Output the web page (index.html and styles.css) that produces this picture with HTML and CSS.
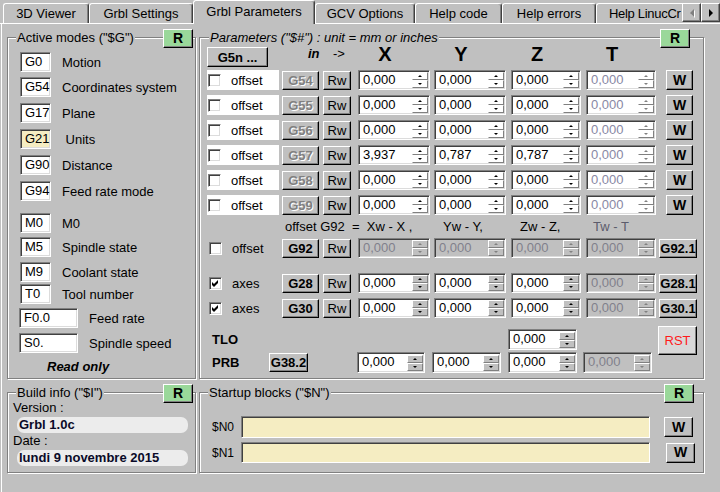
FILE: index.html
```html
<!DOCTYPE html>
<html>
<head>
<meta charset="utf-8">
<link rel="stylesheet" href="styles.css">
</head>
<body>
<div class="tabbar">
  <div class="tabs">
    <div class="tab w1">3D Viewer</div>
    <div class="tab w2">Grbl Settings</div>
    <div class="tab active w3">Grbl Parameters</div>
    <div class="tab w4">GCV Options</div>
    <div class="tab w5">Help code</div>
    <div class="tab w6">Help errors</div>
    <div class="tab w7">Help LinucCr</div>
  </div>
  <div class="scrollers">
    <div class="arr"><span class="tri-l"></span></div>
    <div class="arr"><span class="tri-r"></span></div>
  </div>
</div>

<div class="page">
  <div class="layout">

    <section class="group modes">
      <div class="gtitle">Active modes ("$G")</div>
      <div class="btn rbtn">R</div>
      <div class="mode m0"><span class="code sunk">G0</span><span class="mlabel">Motion</span></div>
      <div class="mode m5"><span class="code sunk">G54</span><span class="mlabel">Coordinates system</span></div>
      <div class="mode"><span class="code sunk">G17</span><span class="mlabel">Plane</span></div>
      <div class="mode"><span class="code sunk yel">G21</span><span class="mlabel pre"> Units</span></div>
      <div class="mode"><span class="code sunk">G90</span><span class="mlabel">Distance</span></div>
      <div class="mode"><span class="code sunk">G94</span><span class="mlabel">Feed rate mode</span></div>
      <div class="mode m12"><span class="code sunk">M0</span><span class="mlabel">M0</span></div>
      <div class="mode m4"><span class="code sunk">M5</span><span class="mlabel">Spindle state</span></div>
      <div class="mode m5"><span class="code sunk">M9</span><span class="mlabel">Coolant state</span></div>
      <div class="mode m2"><span class="code sunk">T0</span><span class="mlabel">Tool number</span></div>
      <div class="mode m4"><span class="code sunk wide">F0.0</span><span class="mlabel">Feed rate</span></div>
      <div class="mode m5"><span class="code sunk wide">S0.</span><span class="mlabel">Spindle speed</span></div>
      <div class="ro">Read only</div>
    </section>

    <section class="group params">
      <div class="gtitle it">Parameters ("$#") : unit = mm or inches</div>
      <div class="btn rbtn rp">R</div>

      <div class="phead">
        <div class="btn g5n">G5n ...</div>
        <span class="in">in</span>
        <span class="arrt">-&gt;</span>
        <span class="axis ax">X</span>
        <span class="axis ay">Y</span>
        <span class="axis az">Z</span>
        <span class="axis at">T</span>
      </div>

      <div class="prow first">
        <div class="chkcell white"><span class="chk"></span><span class="lbl">offset</span></div>
        <div class="btn gbtn dis">G54</div>
        <div class="btn rw">Rw</div>
        <div class="spin sunk sx"><span class="val">0,000</span><span class="sp"><i class="up"></i><i class="dn"></i></span></div>
        <div class="spin sunk sy"><span class="val">0,000</span><span class="sp"><i class="up"></i><i class="dn"></i></span></div>
        <div class="spin sunk sz"><span class="val">0,000</span><span class="sp"><i class="up"></i><i class="dn"></i></span></div>
        <div class="spin sunk st dt"><span class="val">0,000</span><span class="sp"><i class="up"></i><i class="dn"></i></span></div>
        <div class="btn wbtn">W</div>
      </div>
      <div class="prow">
        <div class="chkcell white"><span class="chk"></span><span class="lbl">offset</span></div>
        <div class="btn gbtn dis">G55</div>
        <div class="btn rw">Rw</div>
        <div class="spin sunk sx"><span class="val">0,000</span><span class="sp"><i class="up"></i><i class="dn"></i></span></div>
        <div class="spin sunk sy"><span class="val">0,000</span><span class="sp"><i class="up"></i><i class="dn"></i></span></div>
        <div class="spin sunk sz"><span class="val">0,000</span><span class="sp"><i class="up"></i><i class="dn"></i></span></div>
        <div class="spin sunk st dt"><span class="val">0,000</span><span class="sp"><i class="up"></i><i class="dn"></i></span></div>
        <div class="btn wbtn">W</div>
      </div>
      <div class="prow">
        <div class="chkcell white"><span class="chk"></span><span class="lbl">offset</span></div>
        <div class="btn gbtn dis">G56</div>
        <div class="btn rw">Rw</div>
        <div class="spin sunk sx"><span class="val">0,000</span><span class="sp"><i class="up"></i><i class="dn"></i></span></div>
        <div class="spin sunk sy"><span class="val">0,000</span><span class="sp"><i class="up"></i><i class="dn"></i></span></div>
        <div class="spin sunk sz"><span class="val">0,000</span><span class="sp"><i class="up"></i><i class="dn"></i></span></div>
        <div class="spin sunk st dt"><span class="val">0,000</span><span class="sp"><i class="up"></i><i class="dn"></i></span></div>
        <div class="btn wbtn">W</div>
      </div>
      <div class="prow">
        <div class="chkcell white"><span class="chk"></span><span class="lbl">offset</span></div>
        <div class="btn gbtn dis">G57</div>
        <div class="btn rw">Rw</div>
        <div class="spin sunk sx"><span class="val">3,937</span><span class="sp"><i class="up"></i><i class="dn"></i></span></div>
        <div class="spin sunk sy"><span class="val">0,787</span><span class="sp"><i class="up"></i><i class="dn"></i></span></div>
        <div class="spin sunk sz"><span class="val">0,787</span><span class="sp"><i class="up"></i><i class="dn"></i></span></div>
        <div class="spin sunk st dt"><span class="val">0,000</span><span class="sp"><i class="up"></i><i class="dn"></i></span></div>
        <div class="btn wbtn">W</div>
      </div>
      <div class="prow">
        <div class="chkcell white"><span class="chk"></span><span class="lbl">offset</span></div>
        <div class="btn gbtn dis">G58</div>
        <div class="btn rw">Rw</div>
        <div class="spin sunk sx"><span class="val">0,000</span><span class="sp"><i class="up"></i><i class="dn"></i></span></div>
        <div class="spin sunk sy"><span class="val">0,000</span><span class="sp"><i class="up"></i><i class="dn"></i></span></div>
        <div class="spin sunk sz"><span class="val">0,000</span><span class="sp"><i class="up"></i><i class="dn"></i></span></div>
        <div class="spin sunk st dt"><span class="val">0,000</span><span class="sp"><i class="up"></i><i class="dn"></i></span></div>
        <div class="btn wbtn">W</div>
      </div>
      <div class="prow">
        <div class="chkcell white"><span class="chk"></span><span class="lbl">offset</span></div>
        <div class="btn gbtn dis">G59</div>
        <div class="btn rw">Rw</div>
        <div class="spin sunk sx"><span class="val">0,000</span><span class="sp"><i class="up"></i><i class="dn"></i></span></div>
        <div class="spin sunk sy"><span class="val">0,000</span><span class="sp"><i class="up"></i><i class="dn"></i></span></div>
        <div class="spin sunk sz"><span class="val">0,000</span><span class="sp"><i class="up"></i><i class="dn"></i></span></div>
        <div class="spin sunk st dt"><span class="val">0,000</span><span class="sp"><i class="up"></i><i class="dn"></i></span></div>
        <div class="btn wbtn">W</div>
      </div>

      <div class="note">
        <span class="n1">offset G92  =  Xw - X ,</span>
        <span class="n2">Yw - Y,</span>
        <span class="n3">Zw - Z,</span>
        <span class="n4">Tw - T</span>
      </div>

      <div class="prow r92">
        <div class="chkcell pl2"><span class="chk"></span><span class="lbl">offset</span></div>
        <div class="btn gbtn">G92</div>
        <div class="btn rw">Rw</div>
        <div class="spin sunk sx dis"><span class="val">0,000</span><span class="sp"><i class="up"></i><i class="dn"></i></span></div>
        <div class="spin sunk sy dis"><span class="val">0,000</span><span class="sp"><i class="up"></i><i class="dn"></i></span></div>
        <div class="spin sunk sz dis"><span class="val">0,000</span><span class="sp"><i class="up"></i><i class="dn"></i></span></div>
        <div class="spin sunk st dis"><span class="val">0,000</span><span class="sp"><i class="up"></i><i class="dn"></i></span></div>
        <div class="btn g1btn">G92.1</div>
      </div>

      <div class="prow r28">
        <div class="chkcell pl2"><span class="chk"><svg width="9" height="9" viewBox="0 0 9 9"><polygon points="1,3 3,5 7,1 7,4 3,8 1,6" fill="#000"/></svg></span><span class="lbl">axes</span></div>
        <div class="btn gbtn">G28</div>
        <div class="btn rw">Rw</div>
        <div class="spin sunk sx gs"><span class="val">0,000</span><span class="sp"><i class="up"></i><i class="dn"></i></span></div>
        <div class="spin sunk sy gs"><span class="val">0,000</span><span class="sp"><i class="up"></i><i class="dn"></i></span></div>
        <div class="spin sunk sz gs"><span class="val">0,000</span><span class="sp"><i class="up"></i><i class="dn"></i></span></div>
        <div class="spin sunk st dis"><span class="val">0,000</span><span class="sp"><i class="up"></i><i class="dn"></i></span></div>
        <div class="btn g1btn">G28.1</div>
      </div>
      <div class="prow">
        <div class="chkcell pl2"><span class="chk"><svg width="9" height="9" viewBox="0 0 9 9"><polygon points="1,3 3,5 7,1 7,4 3,8 1,6" fill="#000"/></svg></span><span class="lbl">axes</span></div>
        <div class="btn gbtn">G30</div>
        <div class="btn rw">Rw</div>
        <div class="spin sunk sx gs"><span class="val">0,000</span><span class="sp"><i class="up"></i><i class="dn"></i></span></div>
        <div class="spin sunk sy gs"><span class="val">0,000</span><span class="sp"><i class="up"></i><i class="dn"></i></span></div>
        <div class="spin sunk sz gs"><span class="val">0,000</span><span class="sp"><i class="up"></i><i class="dn"></i></span></div>
        <div class="spin sunk st dis"><span class="val">0,000</span><span class="sp"><i class="up"></i><i class="dn"></i></span></div>
        <div class="btn g1btn">G30.1</div>
      </div>

      <div class="probe">
        <span class="plabel tlo">TLO</span>
        <div class="spin sunk gs pz tloz"><span class="val">0,000</span><span class="sp"><i class="up"></i><i class="dn"></i></span></div>
        <div class="btn rst">RST</div>
        <span class="plabel prb">PRB</span>
        <div class="btn g38">G38.2</div>
        <div class="spin sunk gs px"><span class="val">0,000</span><span class="sp"><i class="up"></i><i class="dn"></i></span></div>
        <div class="spin sunk gs py"><span class="val">0,000</span><span class="sp"><i class="up"></i><i class="dn"></i></span></div>
        <div class="spin sunk gs pz"><span class="val">0,000</span><span class="sp"><i class="up"></i><i class="dn"></i></span></div>
        <div class="spin sunk dis pt"><span class="val">0,000</span><span class="sp"><i class="up"></i><i class="dn"></i></span></div>
      </div>
    </section>

    <section class="group build">
      <div class="gtitle">Build info ("$I")</div>
      <div class="btn rbtn">R</div>
      <div class="bl">Version :</div>
      <div class="bfld">Grbl 1.0c</div>
      <div class="bl">Date :</div>
      <div class="bfld">lundi 9 novembre 2015</div>
    </section>

    <section class="group startup">
      <div class="gtitle">Startup blocks ("$N")</div>
      <div class="btn rbtn rs">R</div>
      <div class="nrow"><span class="nlabel">$N0</span><div class="nfld"></div><div class="btn wbtn nw">W</div></div>
      <div class="nrow n2row"><span class="nlabel">$N1</span><div class="nfld"></div><div class="btn wbtn nw">W</div></div>
    </section>

  </div>
</div>
</body>
</html>
```

FILE: styles.css
```css
* { box-sizing: border-box; }
html, body { margin: 0; padding: 0; }
body {
  width: 720px;
  height: 492px;
  overflow: hidden;
  background: #c0c0c0;
  font-family: "Liberation Sans", Arial, sans-serif;
  font-size: 13px;
  color: #000;
}

/* ---------- tabs ---------- */
.tabbar {
  display: flex;
  height: 24px;
  background: linear-gradient(to bottom, transparent 23px, #fff 23px);
}
.tabs {
  flex: 1;
  display: flex;
  height: 24px;
  overflow: hidden;
  padding-left: 3px;
}
.tab {
  flex: none;
  height: 20px;
  margin-top: 3px;
  background: #c0c0c0;
  border-top: 1px solid #fff;
  border-left: 1px solid #fff;
  border-right: 1px solid #404040;
  box-shadow: inset -1px 0 0 #808080;
  border-radius: 3px 3px 0 0;
  text-align: center;
  line-height: 19px;
  white-space: nowrap;
}
.tab.active {
  height: 24px;
  margin-top: 0;
  line-height: 21px;
}
.w1 { width: 86px; }
.w2 { width: 104px; }
.w3 { width: 122px; }
.w4 { width: 100px; }
.w5 { width: 87px; }
.w6 { width: 94px; }
.w7 { width: 120px; text-align: left; padding-left: 12px; letter-spacing: -0.3px; }

.scrollers { display: flex; }
.arr {
  width: 19px;
  height: 19px;
  margin-top: 3px;
  background: #c0c0c0;
  border: 1px solid;
  border-color: #fff #404040 #404040 #fff;
  box-shadow: inset -1px -1px 0 #808080;
  display: flex;
  align-items: center;
  justify-content: center;
}
.tri-l {
  width: 0; height: 0;
  border-top: 4px solid transparent;
  border-bottom: 4px solid transparent;
  border-right: 4px solid #808080;
  filter: drop-shadow(1px 1px 0 #fff);
}
.tri-r {
  width: 0; height: 0;
  margin-left: 1px;
  border-top: 4px solid transparent;
  border-bottom: 4px solid transparent;
  border-left: 4px solid #000;
}

/* ---------- page ---------- */
.page {
  margin-left: 1px;
  border-left: 1px solid #fff;
  height: 468px;
  padding: 13px 0 0 5px;
}
.layout {
  display: grid;
  grid-template-columns: 189px 505px;
  grid-template-rows: 342px 81px;
  column-gap: 3px;
  row-gap: 13px;
}
.group {
  position: relative;
  border: 1px solid #808080;
  box-shadow: inset 1px 1px 0 #fff, 1px 1px 0 #fff;
}
.gtitle {
  position: absolute;
  top: -8px;
  left: 8px;
  padding: 0 1px;
  background: #c0c0c0;
  line-height: 15px;
  white-space: pre;
}
.gtitle.it { font-style: italic; left: 9px; }

/* ---------- common controls ---------- */
.btn {
  flex: none;
  background: #c0c0c0;
  border: 1px solid;
  border-color: #fff #000 #000 #fff;
  box-shadow: inset -1px -1px 0 #808080;
  display: flex;
  align-items: center;
  justify-content: center;
  white-space: nowrap;
  line-height: 15px;
}
.rbtn {
  position: absolute;
  top: -9px;
  right: 2px;
  width: 30px;
  height: 19px;
  background: #9ad89a;
  font-weight: bold;
  font-size: 14px;
}
.rbtn.rp { right: 13px; }
.rbtn.rs { right: 9px; }

.sunk {
  border: 1px solid;
  border-color: #808080 #fff #fff #808080;
  box-shadow: inset 1px 1px 0 #404040, inset -1px -1px 0 #dcdcdc;
}

/* ---------- active modes ---------- */
.modes { padding: 14px 0 0 12px; }
.mode {
  display: flex;
  align-items: center;
  height: 20px;
  margin-top: 6px;
}
.mode.m0 { margin-top: 0; }
.mode.m2 { margin-top: 2px; }
.mode.m4 { margin-top: 4px; }
.mode.m5 { margin-top: 5px; }
.mode.m12 { margin-top: 12px; }
.code {
  flex: none;
  width: 31px;
  height: 20px;
  background: #fff;
  padding-left: 4px;
  line-height: 18px;
}
.code.wide { width: 59px; margin-left: -1px; }
.code.yel { background: #f5edc2; }
.mlabel { margin-left: 11px; white-space: pre; }
.ro {
  margin: 7px 0 0 27px;
  font-weight: bold;
  font-style: italic;
  line-height: 14px;
}

/* ---------- parameters ---------- */
.params { padding: 9px 0 0 7px; }
.phead {
  display: flex;
  align-items: flex-start;
  height: 20px;
}
.g5n { width: 61px; height: 20px; font-weight: bold; }
.in {
  margin-left: 40px;
  width: 25px;
  font-weight: bold;
  font-style: italic;
  line-height: 14px;
}
.arrt { width: 25px; line-height: 14px; }
.axis {
  font-size: 20px;
  font-weight: bold;
  line-height: 20px;
  margin-top: -3px;
  padding-right: 18px;
  text-align: center;
}
.ax { width: 72px; }
.ay { width: 72px; margin-left: 4px; }
.az { width: 70px; margin-left: 5px; }
.at { width: 70px; margin-left: 5px; }

.prow {
  display: flex;
  align-items: center;
  height: 20px;
  margin-top: 5px;
}
.prow.first { margin-top: 3px; }
.prow.r92 { margin-top: 3px; }
.prow.r28 { margin-top: 15px; }

.chkcell {
  flex: none;
  width: 72px;
  height: 20px;
  display: flex;
  align-items: center;
  padding-left: 1px;
}
.chkcell.white { background: #fff; }
.chkcell.pl2 { padding-left: 2px; }
.chk {
  flex: none;
  width: 13px;
  height: 13px;
  background: #fff;
  border: 1px solid;
  border-color: #808080 #fff #fff #808080;
  box-shadow: inset 1px 1px 0 #404040, inset -1px -1px 0 #dcdcdc;
  padding: 1px;
  display: flex;
}
.chk svg { display: block; }
.lbl { margin-left: 10px; }

.gbtn { width: 37px; height: 19px; margin-left: 3px; font-weight: bold; }
.gbtn.dis { color: #808080; text-shadow: 1px 1px 0 #fff; }
.rw { width: 28px; height: 19px; margin-left: 4px; }
.wbtn { width: 27px; height: 20px; margin-left: 10px; font-weight: bold; font-size: 14px; }
.g1btn { width: 38px; height: 19px; margin-left: 3px; font-weight: bold; }

.spin {
  flex: none;
  height: 20px;
  display: flex;
  background: #fff;
}
.sx { width: 72px; margin-left: 7px; }
.sy { width: 72px; margin-left: 4px; }
.sz { width: 70px; margin-left: 5px; }
.st { width: 70px; margin-left: 5px; }
.val {
  flex: 1;
  padding-left: 4px;
  line-height: 18px;
}
.sp {
  flex: none;
  width: 16px;
  display: flex;
  flex-direction: column;
  justify-content: center;
  margin: 1px 1px 1px 0;
}
.sp i {
  display: flex;
  align-items: center;
  justify-content: center;
  height: 8px;
  border: 1px solid;
  border-color: #fff #808080 #808080 #fff;
}
.sp i::after {
  content: "";
  width: 0;
  height: 0;
  border-left: 2px solid transparent;
  border-right: 2px solid transparent;
}
.sp i.up::after { border-bottom: 2px solid #000; }
.sp i.dn::after { border-top: 2px solid #000; }
.spin.gs .sp i { background: #c0c0c0; }
.spin.dt { color: #8888a4; }
.spin.dis { background: #c0c0c0; color: #80808c; }
.spin.dis .sp i.up::after { border-bottom-color: #808080; }
.spin.dis .sp i.dn::after { border-top-color: #808080; }
.spin.dt .sp i.up::after { border-bottom-color: #808080; }
.spin.dt .sp i.dn::after { border-top-color: #808080; }

.note {
  display: flex;
  margin-top: 4px;
  height: 16px;
  line-height: 16px;
  padding-left: 78px;
  white-space: pre;
}
.n1 { width: 158px; }
.n2 { width: 77px; }
.n3 { width: 73px; }
.n4 { color: #5c5c6c; }

.probe {
  display: grid;
  grid-template-columns: 57px 88px 75px 76px 75px 75px 39px;
  grid-template-rows: 21px 21px;
  row-gap: 2px;
  margin: 11px 0 0 5px;
  align-items: center;
}
.plabel { font-weight: bold; }
.tlo { grid-row: 1; grid-column: 1; }
.prb { grid-row: 2; grid-column: 1; }
.tloz { grid-row: 1; grid-column: 5; }
.rst {
  grid-row: 1 / 3;
  grid-column: 7;
  align-self: start;
  margin-top: -3px;
  width: 39px;
  height: 29px;
  background: #d8d8d8;
  color: #ff1a1a;
}
.g38 { grid-row: 2; grid-column: 2; width: 39px; height: 19px; font-weight: bold; }
.probe .spin { height: 21px; }
.px { grid-row: 2; grid-column: 3; width: 68px; }
.py { grid-row: 2; grid-column: 4; width: 69px; }
.pz { grid-row: 2; grid-column: 5; width: 69px; }
.pz.tloz { grid-row: 1; }
.pt { grid-row: 2; grid-column: 6; width: 69px; }

/* ---------- build info ---------- */
.build { padding: 7px 0 0 5px; }
.bl { line-height: 16px; }
.bfld {
  margin: 1px 0 0 4px;
  width: 171px;
  height: 16px;
  border-radius: 7px;
  background: #ececec;
  font-weight: bold;
  padding-left: 2px;
  line-height: 16px;
  color: #0a0a28;
}

/* ---------- startup blocks ---------- */
.startup { padding: 23px 0 0 12px; }
.nrow { display: flex; align-items: center; }
.n2row { margin-top: 4px; }
.nlabel { width: 29px; font-size: 12px; }
.nfld {
  width: 409px;
  height: 22px;
  background: #f5edc2;
  border: 1px solid;
  border-color: #808080 #fff #fff #808080;
  box-shadow: inset 1px 1px 0 #404040;
}
.n2row .nfld { height: 21px; }
.nw { margin-left: 14px; width: 29px; height: 20px; }
.n2row .nw { margin-left: 16px; }
```
